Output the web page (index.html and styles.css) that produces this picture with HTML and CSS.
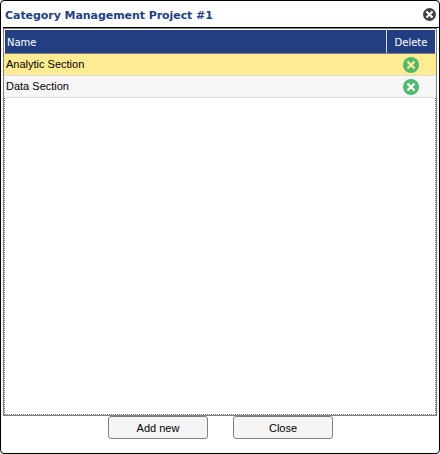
FILE: index.html
```html
<!DOCTYPE html>
<html lang="en">
<head>
<meta charset="utf-8">
<title>Category Management Project #1</title>
<link rel="stylesheet" href="styles.css">
</head>
<body>
<div class="dialog">
  <header class="titlebar">
    <h1 class="title">Category Management Project #1</h1>
    <svg class="dismiss" viewBox="0 0 13 13"><circle cx="6.5" cy="6.5" r="6.5"/><path d="M3.5 3.5l6 6M9.5 3.5l-6 6"/></svg>
  </header>
  <div class="grid">
    <div class="inner">
      <div class="row head"><span class="name">Name</span><span class="action">Delete</span></div>
      <div class="row selected"><span class="name">Analytic Section</span><span class="action"><svg class="remove" viewBox="0 0 16 16"><circle cx="8" cy="8" r="8"/><path d="M4.5 4.5l7 7M11.5 4.5l-7 7"/></svg></span></div>
      <div class="row"><span class="name">Data Section</span><span class="action"><svg class="remove" viewBox="0 0 16 16"><circle cx="8" cy="8" r="8"/><path d="M4.5 4.5l7 7M11.5 4.5l-7 7"/></svg></span></div>
    </div>
  </div>
  <footer class="buttons"><button>Add new</button><button>Close</button></footer>
</div>
</body>
</html>
```

FILE: styles.css
```css
* { box-sizing: border-box; }
body { margin: 0; background: #fff; }
.dialog {
  width: 440px;
  height: 454px;
  border: 1px solid #000;
  border-radius: 4px;
  background: #fff;
  font: 11px "Liberation Sans", Arial, sans-serif;
  color: #000;
}
.titlebar {
  display: flex;
  justify-content: space-between;
  height: 27px;
  margin-left: 2px;
  padding: 7px 3px 0 2px;
  border-bottom: 1px solid #000;
}
.title {
  margin: 0;
  font: bold 11px/15px "DejaVu Sans", Verdana, sans-serif;
  letter-spacing: -0.06px;
  color: #233f83;
  white-space: nowrap;
}
.dismiss { width: 13px; height: 13px; fill: #444; }
.dismiss path { stroke: #fff; stroke-width: 2; }
.grid {
  width: 434px;
  height: 388px;
  margin-left: 2px;
  border: 1px solid #808080;
}
.inner { height: 386px; border: 1px dotted #777; border-top-color: #fff; }
.row {
  display: flex;
  height: 22px;
  margin: 0 -1px;
  padding: 0 1px;
  border-bottom: 1px solid #ddd;
  background: #f7f7f7;
  line-height: 21px;
}
.head {
  height: 24px;
  background: #233f83;
  border: solid #fff;
  border-width: 0 1px 1px;
  border-bottom-color: #808080;
  padding: 0;
  color: #fff;
  font: 10px/25px "DejaVu Sans", Verdana, sans-serif;
}
.selected { background: #ffeb91; }
.name { flex: 1; padding-left: 1px; }
.head .name { padding-left: 2px; border-right: 1px solid #ddd; }
.action { display: flex; width: 49px; justify-content: center; align-items: center; }
.head .action { display: block; width: 48px; text-align: center; }
.remove { width: 16px; height: 16px; fill: #50b96c; }
.remove path { stroke: #fff; stroke-width: 2.4; }
.selected .remove path { stroke: #ffeb91; }
.buttons { display: flex; gap: 25px; padding-left: 107px; }
button {
  width: 100px;
  height: 23px;
  padding: 0;
  border: 1px solid #808080;
  border-radius: 3px;
  background: #f5f5f5;
  color: #000;
  font: 11px "Liberation Sans", Arial, sans-serif;
}
```
